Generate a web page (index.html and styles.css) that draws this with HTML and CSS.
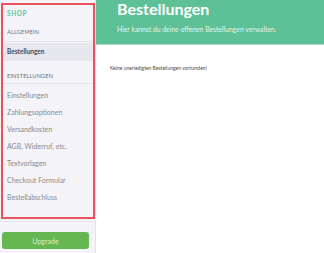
FILE: index.html
```html
<!DOCTYPE html>
<html>
<head>
<meta charset="utf-8">
<link rel="stylesheet" href="styles.css">
</head>
<body>
<div class="app">
  <aside class="sidebar">
    <nav class="menu">
      <div class="brand">SHOP</div>
      <div class="section">ALLGEMEIN</div>
      <div class="item active">Bestellungen</div>
      <div class="section section-second">EINSTELLUNGEN</div>
      <ul class="list">
        <li class="item">Einstellungen</li>
        <li class="item">Zahlungsoptionen</li>
        <li class="item">Versandkosten</li>
        <li class="item">AGB, Widerruf, etc.</li>
        <li class="item">Textvorlagen</li>
        <li class="item">Checkout Formular</li>
        <li class="item">Bestellabschluss</li>
      </ul>
    </nav>
    <div class="footer">
      <button class="upgrade">Upgrade</button>
    </div>
  </aside>
  <main class="main">
    <header class="header">
      <h1 class="title">Bestellungen</h1>
      <p class="subtitle">Hier kannst du deine offenen Bestellungen verwalten.</p>
    </header>
    <div class="content">
      <p class="empty">Keine unerledigten Bestellungen vorhanden!</p>
    </div>
  </main>
</div>
</body>
</html>
```
FILE: styles.css
```css
* { box-sizing: border-box; }
html, body { margin: 0; padding: 0; }
body {
  font-family: Lato, "Open Sans", sans-serif;
  background: #ffffff;
  width: 324px;
  height: 253px;
  overflow: hidden;
}
.app {
  display: flex;
  height: 253px;
}
.sidebar {
  width: 96px;
  flex: none;
  background: #f3f3f8;
  border-right: 1px solid #e2e2ea;
  display: flex;
  flex-direction: column;
}
.menu {
  margin: 3px 0 0 1px;
  width: 94px;
  height: 216px;
  border: 2px solid #e9525d;
  display: flex;
  flex-direction: column;
}
.brand {
  height: 18px;
  line-height: 18px;
  padding-left: 4px;
  font-size: 6.5px;
  font-weight: 700;
  letter-spacing: 0.6px;
  color: #5fc398;
}
.section {
  height: 19px;
  line-height: 18px;
  padding-left: 4px;
  font-size: 5.5px;
  color: #6b6b73;
  letter-spacing: 0.2px;
  border-bottom: 1px solid #e4e4ea;
}
.section-second {
  height: 23px;
  padding-top: 9px;
  line-height: 12px;
}
.item {
  height: 17px;
  line-height: 17px;
  padding-left: 4px;
  font-size: 7px;
  color: #8a8a92;
}
.item.active {
  margin-top: 1px;
  height: 18px;
  line-height: 18px;
  background: #e6e6ef;
  color: #4a4a52;
  font-size: 6.5px;
  font-weight: 700;
}
.list {
  list-style: none;
  margin: 0;
  padding: 3px 0 0 0;
}
.footer {
  margin-top: 2px;
  border-top: 1px solid #e4e4ea;
  flex: 1;
  padding: 10px 0 0 2px;
}
.upgrade {
  display: block;
  width: 87px;
  height: 17px;
  border: none;
  border-radius: 3px;
  background: #66b752;
  color: #d8eed2;
  font-family: Lato, sans-serif;
  font-size: 7px;
  font-weight: 400;
  padding: 0;
}
.main {
  flex: 1;
  display: flex;
  flex-direction: column;
}
.header {
  height: 45px;
  background: #5dc097;
  border-bottom: 1px solid #a9dcc5;
  padding: 0 0 0 21px;
}
.title {
  margin: 0;
  padding-top: 0;
  font-size: 16px;
  line-height: 17px;
  font-weight: 700;
  color: #ffffff;
}
.subtitle {
  margin: 8px 0 0 0;
  font-size: 6.8px;
  line-height: 9px;
  color: #e2f4ec;
}
.content {
  flex: 1;
  padding: 19px 0 0 14px;
}
.empty {
  margin: 0;
  font-size: 5px;
  line-height: 8px;
  color: #4b4b4b;
}
```
